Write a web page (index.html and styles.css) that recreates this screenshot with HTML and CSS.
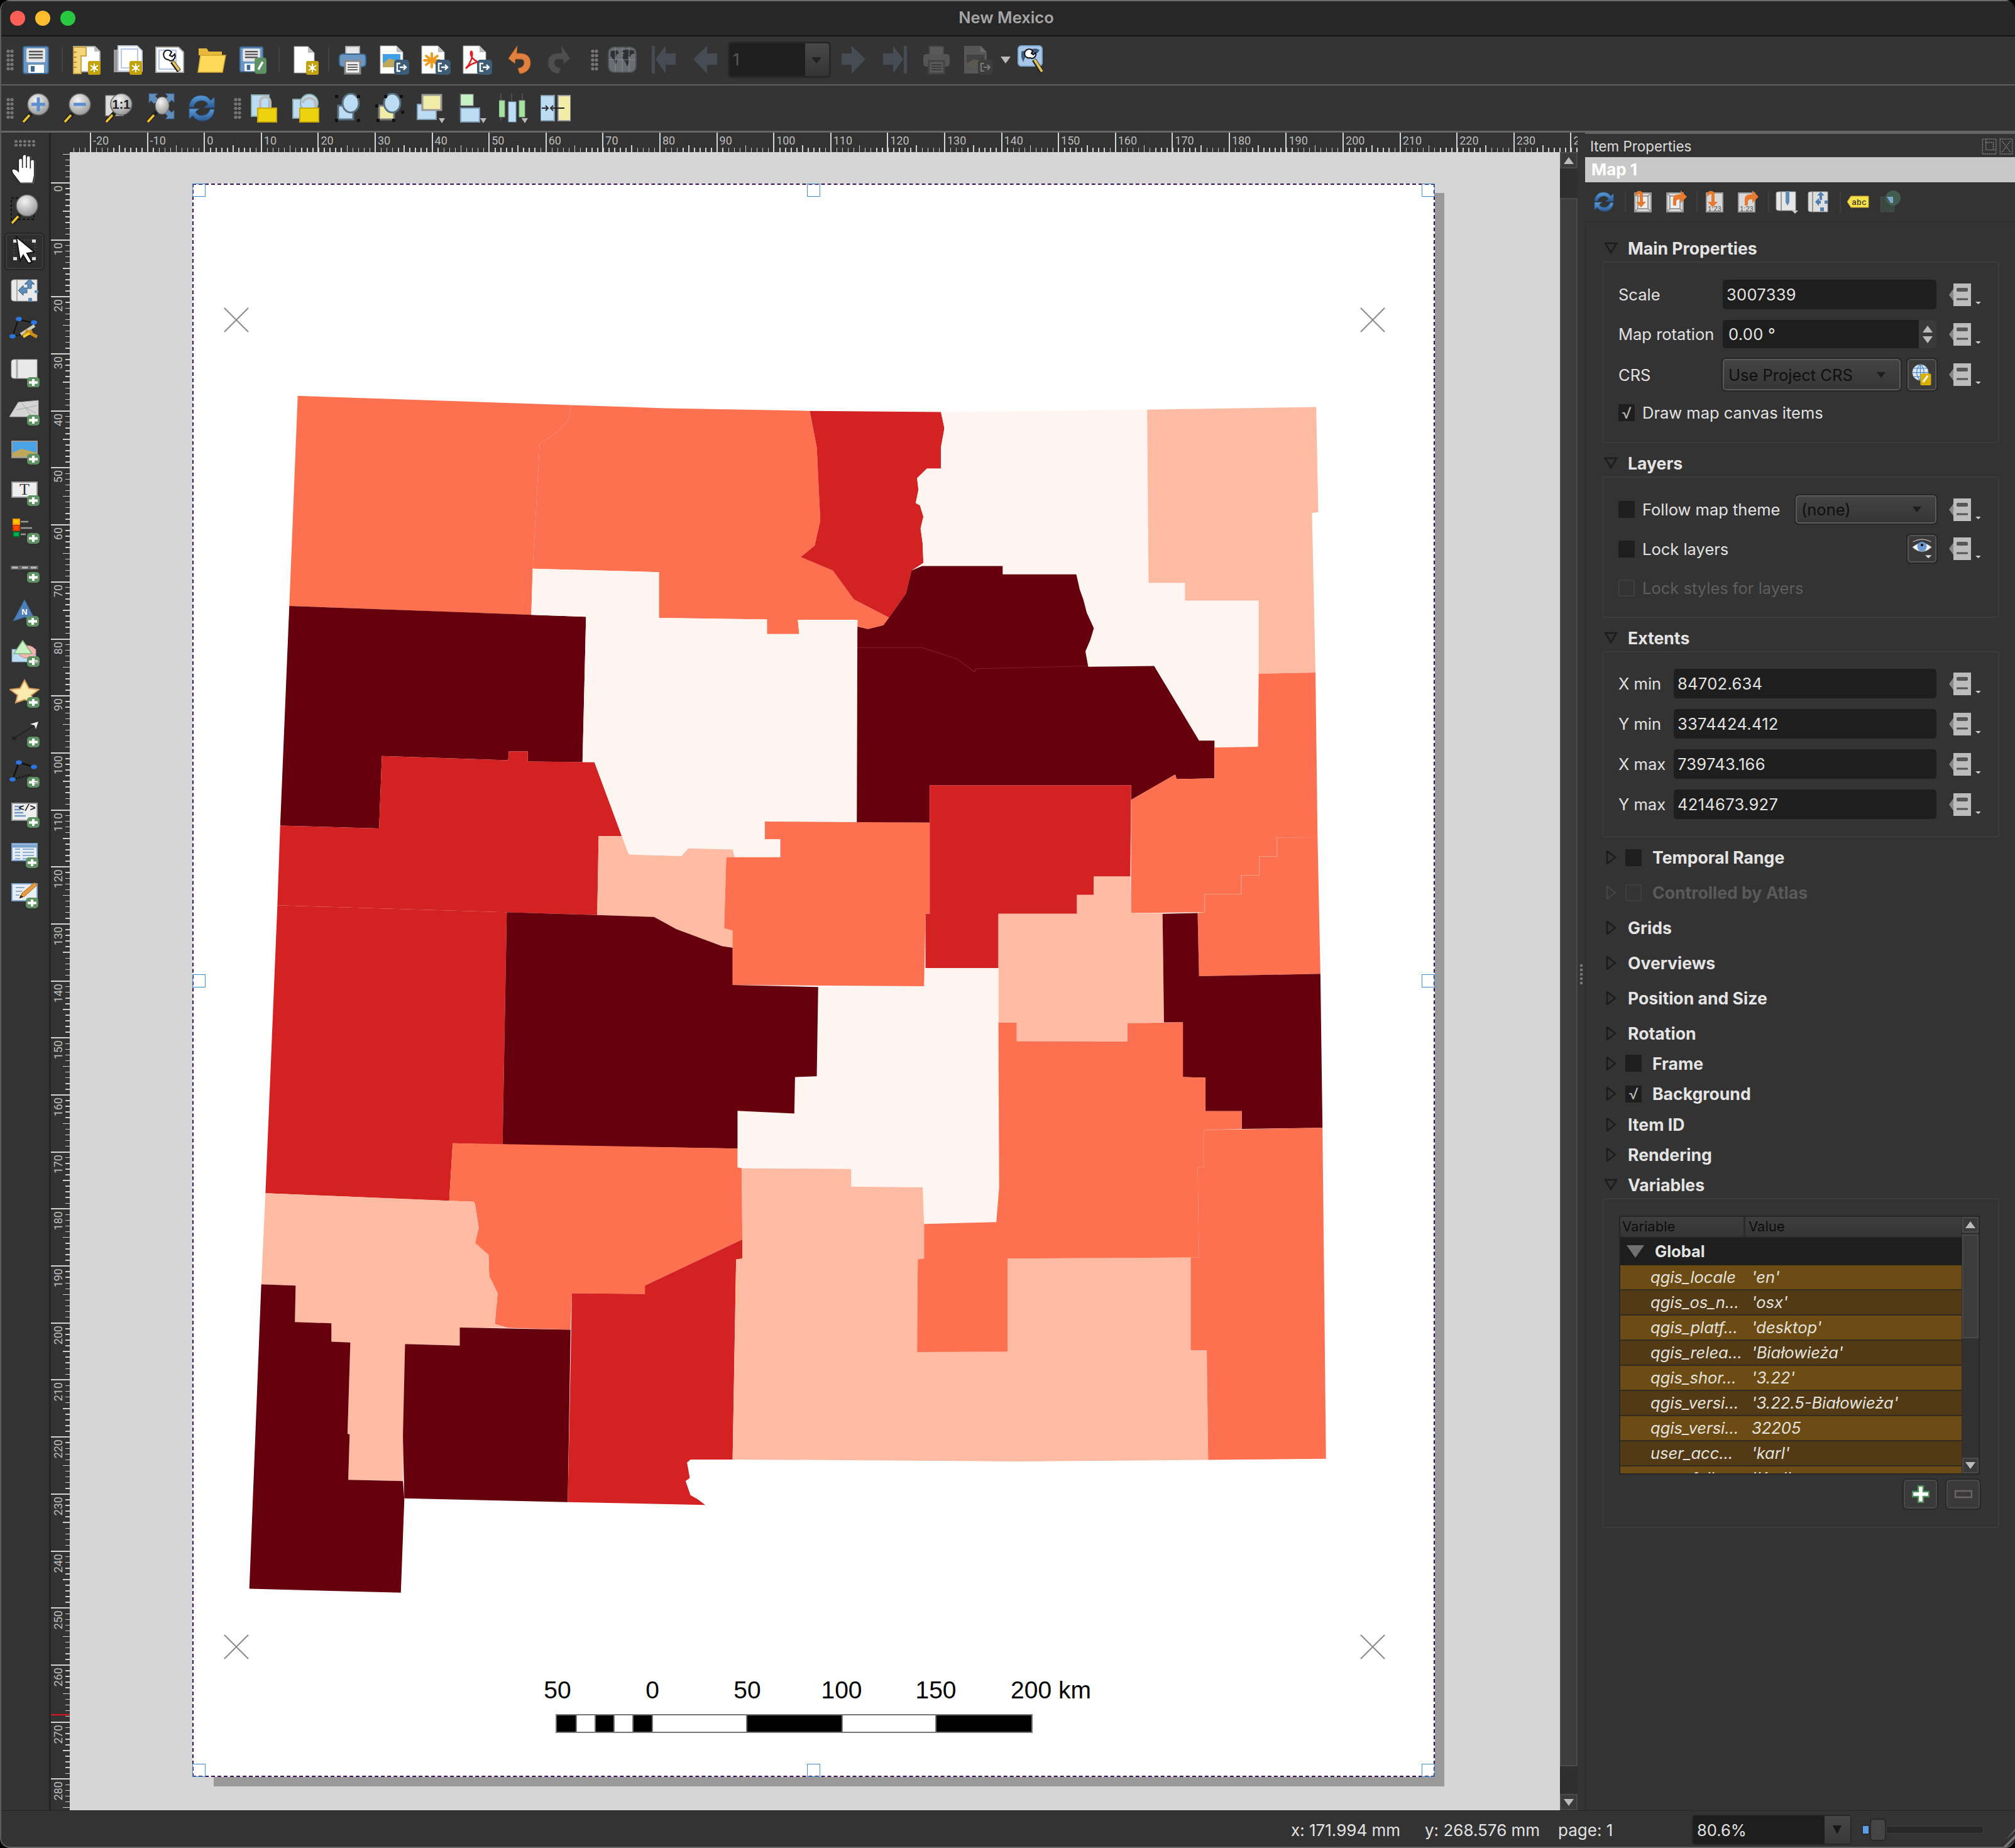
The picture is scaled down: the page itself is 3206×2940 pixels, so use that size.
FILE: index.html
```html
<!DOCTYPE html>
<html lang="en">
<head>
<meta charset="utf-8">
<title>New Mexico</title>
<link rel="stylesheet" href="styles.css">
</head>
<body>
<svg class="defs" xmlns="http://www.w3.org/2000/svg">
  <defs>
    <radialGradient id="gLens" cx=".4" cy=".3" r=".8"><stop offset="0" stop-color="#f4f4f4"/><stop offset="1" stop-color="#8e8e8e"/></radialGradient>
    <linearGradient id="gBlue" x1="0" y1="0" x2="0" y2="1"><stop offset="0" stop-color="#5b9bd8"/><stop offset="1" stop-color="#2b5c98"/></linearGradient>
  </defs>
  <symbol id="bGear" viewBox="0 0 22 24"><rect x="1" y="1" width="20" height="22" rx="3" fill="#c4a309"/><path d="M11 5v14M5 8l12 8M17 8L5 16" stroke="#fff" stroke-width="2"/><circle cx="11" cy="12" r="3" fill="#fff"/></symbol>
  <symbol id="bExp" viewBox="0 0 24 24"><rect width="24" height="24" rx="5" fill="#3d5c75"/><path d="M10 6H5v12h5M9 12h10M15 8l4 4-4 4" fill="none" stroke="#fff" stroke-width="2.4"/></symbol>
  <symbol id="bPlus" viewBox="0 0 20 20"><rect y="2" width="20" height="17" rx="5" fill="#5f9263"/><path d="M10 5v11M3 10.500h14" stroke="#fff" stroke-width="4"/></symbol>
  <symbol id="bPen" viewBox="0 0 22 30"><rect width="22" height="30" rx="5" fill="#5e9163"/><path d="M7 22L15 8" stroke="#fff" stroke-width="4"/></symbol>

  <symbol id="floppy" viewBox="0 0 48 48"><rect x="4" y="3" width="40" height="43" rx="3" fill="#6b96c2" stroke="#3d6690" stroke-width="2"/><rect x="9" y="6" width="30" height="22" rx="2" fill="#e6e6e6"/><path d="M13 11h22M13 16h22M13 21h22" stroke="#555" stroke-width="2.500"/><rect x="12" y="32" width="25" height="13" rx="1" fill="#fff"/><rect x="16" y="34" width="6" height="9" fill="#3d6690"/></symbol>
  <symbol id="newlayout" viewBox="0 0 48 48"><path d="M3 3h34l8 8v32H3z" fill="#fff" stroke="#aaa" stroke-width="2"/><path d="M36 3v8h8z" fill="#bbb"/><path d="M3 4h20v14h-8v28H3z" fill="#f3d67a" stroke="#c9a341" stroke-width="2"/><path d="M3 12h5M3 20h5M3 28h5M3 36h5" stroke="#a07c1e" stroke-width="1.500"/><use href="#bGear" x="25" y="25" width="22" height="24"/></symbol>
  <symbol id="dup" viewBox="0 0 48 48"><rect x="1" y="8" width="36" height="36" fill="#999"/><path d="M8 2h30l8 8v32H8z" fill="#fff" stroke="#c8cfe2" stroke-width="2"/><path d="M13 7h26v30H13z" fill="#fff" stroke="#b9c9ee" stroke-width="2"/><use href="#bGear" x="25" y="25" width="22" height="24"/></symbol>
  <symbol id="manager" viewBox="0 0 48 48"><path d="M2 4h36l8 8v32H2z" fill="#fff" stroke="#aaa" stroke-width="2"/><path d="M7 9h27v30H7z" fill="none" stroke="#b9c9ee" stroke-width="2.500"/><path d="M17 10a8 8 0 0 1 10 2l-3 5 4 2 4-4a8 8 0 0 1-7 11L22 24a8 8 0 0 1-5-14z" fill="#fff" stroke="#111" stroke-width="2"/><path d="M28 27l11 15" stroke="#111" stroke-width="7"/><path d="M29 27l10 14" stroke="#e4c057" stroke-width="4"/></symbol>
  <symbol id="folder" viewBox="0 0 48 48"><path d="M4 6h13l3 5h21v6H4z" fill="#e6b93a"/><path d="M7 17h40l-5 27H3z" fill="#ffd95a" stroke="#d3a730" stroke-width="1.500"/></symbol>
  <symbol id="savetpl" viewBox="0 0 48 48"><use href="#floppy" width="44" height="44" x="0" y="1"/><use href="#bPen" x="27" y="20" width="19" height="27"/></symbol>
  <symbol id="newpage" viewBox="0 0 48 48"><path d="M6 3h22l10 10v32H6z" fill="#fff" stroke="#aaa"/><path d="M28 3v10h10z" fill="#bbb"/><use href="#bGear" x="24" y="25" width="22" height="24"/></symbol>
  <symbol id="printer" viewBox="0 0 48 48"><rect x="13" y="3" width="22" height="16" fill="#e8e8e8" stroke="#aaa" stroke-width="2"/><rect x="3" y="15" width="42" height="20" rx="5" fill="#6b96c2" stroke="#3d6690" stroke-width="2"/><rect x="12" y="26" width="24" height="20" fill="#eee" stroke="#888" stroke-width="3"/><path d="M16 32h16M16 36h16M16 40h16" stroke="#666" stroke-width="2"/></symbol>
  <symbol id="eimg" viewBox="0 0 48 48"><path d="M2 2h26l10 10v34H2z" fill="#fff" stroke="#aaa"/><path d="M28 2v10h10z" fill="#bbb"/><rect x="6" y="15" width="28" height="21" fill="#3ea0e6"/><path d="M6 30l10-8 18 5v9H6z" fill="#bfa85c"/><use href="#bExp" x="24" y="24" width="24" height="24"/></symbol>
  <symbol id="esvg" viewBox="0 0 48 48"><path d="M2 2h26l10 10v34H2z" fill="#fff" stroke="#aaa"/><path d="M28 2v10h10z" fill="#bbb"/><path d="M18 14v22M9 18l18 14M27 18L9 32M6 25h24" stroke="#f09a1e" stroke-width="4" stroke-linecap="round"/><use href="#bExp" x="24" y="24" width="24" height="24"/></symbol>
  <symbol id="epdf" viewBox="0 0 48 48"><path d="M2 2h26l10 10v34H2z" fill="#fff" stroke="#aaa"/><path d="M28 2v10h10z" fill="#bbb"/><path d="M6 38C12 32 18 20 16 12c-1-3-3 0-2 4 2 7 10 13 20 13 3 0-1-3-6-2-6 1-14 3-22 11z" fill="none" stroke="#e31d1d" stroke-width="2.500"/><use href="#bExp" x="24" y="24" width="24" height="24"/></symbol>
  <symbol id="undo" viewBox="0 0 48 48"><path d="M22 2L8 22l10 8 1-7h8c4 0 6 2 6 6s-3 7-7 8l-3 1 3 8c10 0 17-8 17-17 0-10-7-15-16-15h-6z" fill="#e0813e" stroke="#b55f25"/></symbol>
  <symbol id="redo" viewBox="0 0 48 48"><path d="M26 2L40 22l-10 8-1-7h-8c-4 0-6 2-6 6s3 7 7 8l3 1-3 8C12 46 5 38 5 29c0-10 7-15 16-15h6z" fill="#4e4e4e" stroke="#444"/></symbol>
  <symbol id="globe" viewBox="0 0 48 48"><rect x="2" y="4" width="44" height="40" rx="9" fill="#6a6e72" stroke="#4c5055" stroke-width="2"/><path d="M6 10l10-1 3 4-4 3-2 6 3 3-2 7-3-6-3-5-3-3zM22 10l8-2 12 1 2 5-5 1-3 5-3-1 2 8-3 8-3-7-3-4-3-4 3-2-2-3 4-1z" fill="#2e3033"/><path d="M3 24h42M24 4v40M13 4v40M35 4v40" stroke="#868a8e"/></symbol>
  <symbol id="first" viewBox="0 0 48 48"><rect x="5" y="2" width="5" height="44" fill="#454c54"/><path d="M11 23L27 2v12h16v18H27v14z" fill="#454c54"/></symbol>
  <symbol id="prev" viewBox="0 0 48 48"><path d="M5 23L27 2v12h16v18H27v14z" fill="#454c54"/></symbol>
  <symbol id="next" viewBox="0 0 48 48"><path d="M43 23L21 2v12H5v18h16v14z" fill="#454c54"/></symbol>
  <symbol id="last" viewBox="0 0 48 48"><rect x="38" y="2" width="5" height="44" fill="#454c54"/><path d="M37 23L21 2v12H5v18h16v14z" fill="#454c54"/></symbol>
  <symbol id="printerd" viewBox="0 0 48 48"><rect x="13" y="3" width="22" height="16" fill="#5a5a5a" stroke="#4a4a4a" stroke-width="2"/><rect x="3" y="15" width="42" height="20" rx="5" fill="#555"/><rect x="12" y="26" width="24" height="20" fill="#5a5a5a" stroke="#444" stroke-width="3"/><path d="M16 32h16M16 36h16M16 40h16" stroke="#3c3c3c" stroke-width="2"/></symbol>
  <symbol id="eimgd" viewBox="0 0 48 48"><path d="M2 2h26l10 10v34H2z" fill="#565656"/><path d="M28 2v10h10z" fill="#6a6a6a"/><rect x="6" y="16" width="28" height="20" fill="#424242"/><path d="M6 30l12-7 16 5v8H6z" fill="#5a5850"/><rect x="24" y="24" width="24" height="24" rx="5" fill="#3c3c3c"/><path d="M34 30h-5v12h5M33 36h10M39 32l4 4-4 4" fill="none" stroke="#777" stroke-width="2.200"/></symbol>
  <symbol id="atset" viewBox="0 0 48 48"><rect x="2" y="2" width="38" height="32" rx="5" fill="#a7c6e8" stroke="#7fa8d4" stroke-width="2"/><path d="M7 11c5-2 8-1 9 3l-3 6-3 8-3-8zM24 7c6-2 10 0 12 2l-3 4-4 1 1 4-6 2z" fill="#3e5c7c"/><path d="M16 8a7 7 0 0 1 9 2l-2 4 3 2 4-3a7 7 0 0 1-6 9l-3-1a7 7 0 0 1-5-13z" fill="#fff" stroke="#111" stroke-width="2"/><path d="M27 24l13 20" stroke="#222" stroke-width="7"/><path d="M28 24l12 19" stroke="#e4c057" stroke-width="4"/></symbol>

  <symbol id="mag" viewBox="0 0 48 48"><path d="M18 31L4 46" stroke="#222" stroke-width="7"/><path d="M14 35L4 46" stroke="#f0c52e" stroke-width="3.500"/><circle cx="28" cy="18" r="17" fill="url(#gLens)" stroke="#666" stroke-width="1.500"/></symbol>
  <symbol id="zin" viewBox="0 0 48 48"><use href="#mag"/><path d="M28 7v22M17 18h22" stroke="#5b8fd0" stroke-width="5"/></symbol>
  <symbol id="zout" viewBox="0 0 48 48"><use href="#mag"/><path d="M18 18h20" stroke="#5b8fd0" stroke-width="5"/></symbol>
  <symbol id="z11" viewBox="0 0 48 48"><rect x="3" y="4" width="28" height="32" fill="#ddd" stroke="#999"/><use href="#mag"/></symbol>
  <symbol id="zfull" viewBox="0 0 48 48"><path d="M6 1h14l-4 4 5 5-7 7-5-5-3 4zM46 1v14l-4-4-5 6-6-6 5-6-4-4zM46 41H32l4-4-5-5 6-6 5 5 4-4z" fill="#5f8cb8" stroke="#3a628c"/><path d="M18 30L4 46" stroke="#222" stroke-width="6"/><path d="M14 35L4 46" stroke="#f0c52e" stroke-width="3.500"/><ellipse cx="27" cy="20" rx="11" ry="14" fill="url(#gLens)" stroke="#666"/></symbol>
  <symbol id="refresh" viewBox="0 0 48 48"><path d="M4 22C5 10 14 3 24 4c6 0 11 3 14 8l6-5v16H28l6-5c-2-4-6-6-10-6-6 0-12 4-13 10z" fill="url(#gBlue)" stroke="#2a5a90"/><path d="M44 26C43 38 34 45 24 44c-6 0-11-3-14-8l-6 5V25h16l-6 5c2 4 6 6 10 6 6 0 12-4 13-10z" fill="url(#gBlue)" stroke="#2a5a90"/></symbol>
  <symbol id="lock" viewBox="0 0 48 48"><rect x="2" y="3" width="28" height="34" fill="#bcdcf4" stroke="#8aa" stroke-width="2"/><path d="M16 26V14a8 8 0 0 1 16 0v12" fill="none" stroke="#bbb" stroke-width="4"/><rect x="12" y="24" width="30" height="22" fill="#ecd30e" stroke="#c8a90c" stroke-width="2"/></symbol>
  <symbol id="unlock" viewBox="0 0 48 48"><rect x="2" y="10" width="24" height="30" fill="#bcdcf4" stroke="#8aa" stroke-width="2"/><circle cx="28" cy="16" r="14" fill="#bcdcf4" stroke="#8aa" stroke-width="2"/><path d="M18 16a10 8 0 0 1 20 0v8" fill="none" stroke="#bbb" stroke-width="4"/><rect x="13" y="24" width="30" height="22" fill="#ecd30e" stroke="#c8a90c" stroke-width="2"/></symbol>
  <symbol id="group" viewBox="0 0 48 48"><rect x="8" y="20" width="24" height="22" fill="#bcdcf4" stroke="#58707f" stroke-width="3"/><ellipse cx="28" cy="16" rx="13" ry="15" fill="#bcdcf4" stroke="#58707f" stroke-width="3"/><path d="M3 3h5v5H3zM38 3h5v5h-5zM3 41h5v5H3zM38 41h5v5h-5z" fill="#111"/></symbol>
  <symbol id="ungroup" viewBox="0 0 48 48"><rect x="7" y="20" width="24" height="22" fill="#f1eda8" stroke="#777" stroke-width="3"/><ellipse cx="28" cy="16" rx="13" ry="15" fill="#bcdcf4" stroke="#58707f" stroke-width="3"/><path d="M15 3h5v5h-5zM40 3h5v5h-5zM1 18h5v5H1zM42 28h5v5h-5zM3 41h5v5H3zM28 41h5v5h-5z" fill="#111"/></symbol>
  <symbol id="raise" viewBox="0 0 48 48"><rect x="2" y="18" width="30" height="24" fill="#bcdcf4" stroke="#7f9db5" stroke-width="2"/><rect x="10" y="3" width="30" height="24" fill="#f1eda8" stroke="#999" stroke-width="3"/><path d="M36 40h10l-5 8z" fill="#bbb"/></symbol>
  <symbol id="alignL" viewBox="0 0 48 48"><path d="M3 0v44" stroke="#444" stroke-width="1.500"/><rect x="5" y="2" width="20" height="18" fill="#c6f2c4" stroke="#999"/><rect x="5" y="24" width="30" height="22" fill="#bcdcf4" stroke="#7f9db5" stroke-width="2"/><path d="M36 40h10l-5 8z" fill="#bbb"/></symbol>
  <symbol id="distrib" viewBox="0 0 48 48"><path d="M3 0v44M20 0v44M37 0v44" stroke="#555" stroke-width="1.500"/><rect x="0" y="12" width="9" height="26" fill="#a5e1a3" stroke="#7fb27d"/><rect x="15" y="14" width="12" height="32" fill="#bcdcf4" stroke="#7f9db5"/><rect x="32" y="12" width="9" height="26" fill="#a5e1a3" stroke="#7fb27d"/><path d="M36 40h10l-5 8z" fill="#bbb"/></symbol>
  <symbol id="resize" viewBox="0 0 48 48"><rect x="0" y="4" width="22" height="40" fill="#bcdcf4" stroke="#7f9db5" stroke-width="2"/><rect x="28" y="4" width="20" height="40" fill="#f1eda8" stroke="#999" stroke-width="2"/><path d="M2 24h8M18 24h12M38 24h-8M8 20l4 4-4 4M20 20l-4 4 4 4" fill="none" stroke="#222" stroke-width="1.800"/></symbol>

  <symbol id="hand" viewBox="0 0 48 48"><g transform="translate(-6 0) scale(1.27 1)"><path d="M19 47L10 31Q7 24 11 24Q14 24 17 28V11Q17 7 20 7Q22 7 22 10V22V5Q22 1 25 1Q27 1 27 5V22V6Q27 3 30 3Q32 3 32 7V23V12Q32 9 35 9Q37 9 37 12V34L35 47Z" fill="#999"/><path d="M18 46L9 31Q6 24 10 24Q13 24 16 28V11Q16 7 19 7Q21 7 21 10V22V5Q21 1 24 1Q26 1 26 5V22V6Q26 3 29 3Q31 3 31 7V23V12Q31 9 34 9Q36 9 36 12V34L34 46Z" fill="#fff" stroke="#1c1c1c" stroke-width="1.200"/></g></symbol>
  <symbol id="zoomt" viewBox="0 0 48 48"><rect x="3" y="6" width="36" height="34" fill="none" stroke="#111" stroke-width="2" stroke-dasharray="4 3"/><use href="#mag"/></symbol>
  <symbol id="select" viewBox="0 0 48 48"><path d="M6 8h6v5H6zM36 8h6v5h-6zM6 36h6v5H6zM36 36h6v5h-6z" fill="#ddd"/><path d="M7 14v22M41 14v22M13 9h22" stroke="#666" stroke-dasharray="2 3"/><path d="M11 4L40 28 28 30 36 44 30 46 22 33 17 42z" fill="#fff" stroke="#111" stroke-width="2"/></symbol>
  <symbol id="movec" viewBox="0 0 48 48"><path d="M8 5h36v34H8q-5 0-5-4V9q0-4 5-4z" fill="#e9e9e9" stroke="#aaa"/><path d="M12 5v34" stroke="#aaa" stroke-width="2"/><path d="M14 22L22 14v4h6v8h-6v4zM32 4l8 8h-5v7h-6v-7h-5z" fill="#5f8cb8" stroke="#3a628c"/><path d="M40 22h6v4h-6zM30 34h6v6h-6z" fill="#5f8cb8"/></symbol>
  <symbol id="editn" viewBox="0 0 48 48"><path d="M14 4L5 31M14 4l26 6" stroke="#111" stroke-width="2"/><path d="M5 31l30-6" stroke="#111" stroke-width="2" stroke-dasharray="3 2"/><ellipse cx="15" cy="3.500" rx="5" ry="3.500" fill="#2b78e4"/><ellipse cx="39" cy="9" rx="5" ry="3.500" fill="#2b78e4"/><ellipse cx="5" cy="31" rx="5" ry="3.500" fill="#2b78e4"/><path d="M18 28l22-14" stroke="#ccb" stroke-width="5"/><path d="M22 30l14-8M26 22l18 10" stroke="#c8901a" stroke-width="5"/><path d="M22 32l10-6" stroke="#f5d020" stroke-width="4"/></symbol>
  <symbol id="addmap" viewBox="0 0 48 48"><path d="M8 4h36v30H8q-5 0-5-4V8q0-4 5-4z" fill="#e9e9e9" stroke="#aaa"/><path d="M12 4v30" stroke="#aaa" stroke-width="3"/><use href="#bPlus" x="28" y="30" width="20" height="20"/></symbol>
  <symbol id="add3d" viewBox="0 0 48 48"><path d="M14 8l32-3v26H0z" fill="#d4d4d4" stroke="#aaa"/><path d="M10 20l16-3 8 12M20 10l6 7 18-4M26 17l16 8" stroke="#aaa" fill="none"/><use href="#bPlus" x="28" y="26" width="20" height="20"/></symbol>
  <symbol id="addpic" viewBox="0 0 48 48"><rect x="4" y="6" width="40" height="26" fill="#4aa3e6" stroke="#999" stroke-width="2"/><path d="M5 24l14-6 24 6v7H5z" fill="#bfa85c"/><use href="#bPlus" x="28" y="24" width="20" height="20"/></symbol>
  <symbol id="addlabel" viewBox="0 0 48 48"><rect x="4" y="7" width="40" height="24" fill="#eee" stroke="#999" stroke-width="2"/></symbol>
  <symbol id="addleg" viewBox="0 0 48 48"><rect x="6" y="2" width="10" height="8" fill="#ffc400" stroke="#ff9a00" stroke-width="2"/><rect x="6" y="12" width="10" height="8" fill="#ff4a00" stroke="#c83a00" stroke-width="2"/><rect x="6" y="22" width="10" height="8" fill="#00b050" stroke="#0b5c2c" stroke-width="2"/><path d="M18 6h12M18 16h18M18 26h8" stroke="#999" stroke-width="2.500"/><use href="#bPlus" x="28" y="22" width="20" height="20"/></symbol>
  <symbol id="addscale" viewBox="0 0 48 48"><rect x="2" y="12" width="44" height="6" fill="#666"/><path d="M4 15h9M20 15h9M34 15h9" stroke="#bbb" stroke-width="3"/><use href="#bPlus" x="28" y="20" width="20" height="20"/></symbol>
  <symbol id="addnorth" viewBox="0 0 48 48"><path d="M24 2L6 36l18-6 18 6z" fill="#4f7fb8" stroke="#345f90"/></symbol>
  <symbol id="addshape" viewBox="0 0 48 48"><rect x="4" y="17" width="38" height="20" fill="#bcdcf4" stroke="#7f9db5"/><ellipse cx="28" cy="21" rx="14" ry="10" fill="#f4b4b0" stroke="#d08884"/><path d="M21 3l15 21H7z" fill="#c6f2c4" stroke="#7fb27d" stroke-width="1.500"/><use href="#bPlus" x="28" y="26" width="20" height="20"/><path d="M38 36h10l-5 4z" fill="#aaa"/></symbol>
  <symbol id="addstar" viewBox="0 0 48 48"><path d="M24 2l7 13 16 2-12 9 3 11-14-4-14 5 3-12L1 17l16-2z" fill="#fbeab0" stroke="#d89a5a" stroke-width="2"/><use href="#bPlus" x="28" y="27" width="20" height="20"/></symbol>
  <symbol id="addarrow" viewBox="0 0 48 48"><rect x="4" y="28" width="7" height="5" fill="#222"/><path d="M8 30L40 10" stroke="#222" stroke-width="1.500"/><path d="M46 4L33 8l7 2 2 6z" fill="#eee"/><use href="#bPlus" x="28" y="26" width="20" height="20"/></symbol>
  <symbol id="addnode" viewBox="0 0 48 48"><path d="M15 5L5 32M15 5l24 7" stroke="#111" stroke-width="2.500"/><path d="M5 32l30-8" stroke="#111" stroke-width="2" stroke-dasharray="3 2"/><ellipse cx="15" cy="5" rx="5" ry="3.500" fill="#2b78e4"/><ellipse cx="39" cy="12" rx="5" ry="3.500" fill="#2b78e4"/><ellipse cx="5" cy="32" rx="5" ry="3.500" fill="#2b78e4"/><use href="#bPlus" x="28" y="26" width="20" height="20"/><path d="M38 36h10l-5 4z" fill="#aaa"/></symbol>
  <symbol id="addhtml" viewBox="0 0 48 48"><rect x="4" y="6" width="40" height="27" fill="#eee" stroke="#999" stroke-width="2"/><path d="M8 11h12M8 16h10M8 21h14M8 26h18" stroke="#7099c8" stroke-width="2.500"/></symbol>
  <symbol id="addtable" viewBox="0 0 48 48"><rect x="4" y="6" width="40" height="27" fill="#e8eef6" stroke="#7aa3d0" stroke-width="2"/><path d="M4 10h40" stroke="#7aa3d0" stroke-width="5"/><path d="M9 15h8M21 15h18M9 20h8M21 20h18M9 25h8M21 25h18M9 30h8M21 30h18" stroke="#7099c8" stroke-width="1.500"/><use href="#bPlus" x="24" y="26" width="24" height="20"/></symbol>
  <symbol id="addfix" viewBox="0 0 48 48"><rect x="4" y="6" width="40" height="27" fill="#e8eef6" stroke="#7aa3d0" stroke-width="2"/><path d="M10 12h14M10 18h10M10 24h6" stroke="#7099c8" stroke-width="1.500"/><path d="M40 4L20 21l-4 8 8-3 20-18z" fill="#e89a3c" stroke="#a8621a"/><path d="M18 24l-2 5 6-2z" fill="#222"/><use href="#bPlus" x="24" y="26" width="24" height="20"/></symbol>

  <symbol id="setext" viewBox="0 0 36 40"><path d="M4 6h26v30H4z" fill="#d8d8d8" stroke="#999" stroke-width="2"/><path d="M9 11h16v20H9zM4 6l5 5M30 6l-5 5M4 36l5-5M30 36l-5-5" fill="#efefef" stroke="#888" stroke-width="1.500"/><path d="M6 12C2 4 12-1 17 6v14h5l-8 9-8-9h6V9C12 7 8 8 6 12z" fill="#e87a2f"/></symbol>
  <symbol id="viewext" viewBox="0 0 36 40"><path d="M4 6h26v30H4z" fill="#d8d8d8" stroke="#999" stroke-width="2"/><path d="M9 11h16v20H9zM4 6l5 5M30 6l-5 5M4 36l5-5M30 36l-5-5" fill="#efefef" stroke="#888" stroke-width="1.500"/><path d="M14 26V16c0-6 4-8 12-8V2l10 10-10 10v-6c-5 0-7 1-7 5v5z" fill="#e87a2f"/></symbol>
  <symbol id="setscale" viewBox="0 0 36 40"><path d="M4 6h26v30H4z" fill="#d8d8d8" stroke="#999" stroke-width="2"/><path d="M6 12C2 4 12-1 17 6v14h5l-8 9-8-9h6V9C12 7 8 8 6 12z" fill="#e87a2f"/></symbol>
  <symbol id="viewscale" viewBox="0 0 36 40"><path d="M4 6h26v30H4z" fill="#d8d8d8" stroke="#999" stroke-width="2"/><path d="M14 26V16c0-6 4-8 12-8V2l10 10-10 10v-6c-5 0-7 1-7 5v5z" fill="#e87a2f"/></symbol>
  <symbol id="bookmk" viewBox="0 0 36 40"><path d="M6 4h26v30H6q-5 0-5-3V6q0-2 5-2z" fill="#e6e6e6" stroke="#999"/><path d="M9 4v30" stroke="#999" stroke-width="2"/><path d="M16 3h6v18l-3 5-3-5z" fill="#5f8cb8"/><path d="M26 34h10l-5 5z" fill="#ccc"/></symbol>
  <symbol id="interact" viewBox="0 0 36 40"><path d="M6 4h26v32H6q-5 0-5-3V6q0-2 5-2z" fill="#dedede" stroke="#999"/><path d="M8 4v32" stroke="#999" stroke-width="2"/><path d="M12 20l6-6v4h3v5h-3v4zM21 4l6 6h-4v7h-4v-7h-4zM27 18h5v5h-5zM20 29h6v6h-6z" fill="#4f7fb0"/></symbol>
  <symbol id="abc" viewBox="0 0 36 40"><path d="M0 20L6 11h28v18H6z" fill="#f7e14a" stroke="#c9a12a"/></symbol>
  <symbol id="overlay" viewBox="0 0 36 40"><rect x="2" y="12" width="22" height="24" fill="#3b4a41" stroke="#555" stroke-dasharray="2 2"/><circle cx="22" cy="14" r="12" fill="#425d4f"/><path d="M12 12h10v10h-4l-3-5z" fill="#7da6cc"/></symbol>
  <symbol id="crsbtn" viewBox="0 0 40 40"><circle cx="17" cy="16" r="15" fill="#dfe8f2" stroke="#8a8a8a"/><path d="M2 16h30M17 1v30M5 8h24M5 24h24M17 1c-9 8-9 22 0 30M17 1c9 8 9 22 0 30" fill="none" stroke="#4a8ad0" stroke-width="1.500"/><rect x="17" y="18" width="20" height="22" rx="3" fill="#d9b000"/><path d="M22 34l9-12" stroke="#fff" stroke-width="3.500"/></symbol>
  <symbol id="eye" viewBox="0 0 40 40"><path d="M3 7Q20-2 37 7" fill="none" stroke="#bbb" stroke-width="1.500"/><path d="M2 17Q20 2 38 17Q20 34 2 17z" fill="#fff" stroke="#888"/><circle cx="20" cy="16" r="9" fill="#6c9bd2"/><circle cx="20" cy="13" r="2.500" fill="#111"/><path d="M26 32h12l-6 6z" fill="#ddd"/></symbol>
  <symbol id="dd" viewBox="0 0 50 36"><path d="M0 18L8 7v22z" fill="#888"/><rect x="7" y="0" width="28" height="36" fill="#bcbcbc"/><rect x="12" y="7" width="18" height="6" rx="2" fill="#555"/><path d="M12 25h18" stroke="#555" stroke-width="3"/><path d="M42 29h9l-4.500 4z" fill="#ccc"/></symbol>
</svg>

<div class="window">
  <header class="titlebar">
    <div class="lights"><span class="light red"></span><span class="light amber"></span><span class="light green"></span></div>
    <div class="title">New Mexico</div>
  </header>

  <div class="toolbar tb1">
    <span class="grip"></span>
    <span class="tb"><svg class="ico"><use href="#floppy"/></svg></span>
    <span class="sep s15"></span>
    <span class="tb"><svg class="ico"><use href="#newlayout"/></svg></span>
    <span class="tb"><svg class="ico"><use href="#dup"/></svg></span>
    <span class="tb"><svg class="ico"><use href="#manager"/></svg></span>
    <span class="tb"><svg class="ico"><use href="#folder"/></svg></span>
    <span class="tb"><svg class="ico"><use href="#savetpl"/></svg></span>
    <span class="sep s18"></span>
    <span class="tb"><svg class="ico"><use href="#newpage"/></svg></span>
    <span class="sep s9"></span>
    <span class="tb"><svg class="ico"><use href="#printer"/></svg></span>
    <span class="tb"><svg class="ico"><use href="#eimg"/></svg></span>
    <span class="tb"><svg class="ico"><use href="#esvg"/></svg></span>
    <span class="tb"><svg class="ico"><use href="#epdf"/></svg></span>
    <span class="tb"><svg class="ico"><use href="#undo"/></svg></span>
    <span class="tb"><svg class="ico"><use href="#redo"/></svg></span>
    <span class="grip g2"></span>
    <span class="tb"><svg class="ico"><use href="#globe"/></svg></span>
    <span class="tb"><svg class="ico"><use href="#first"/></svg></span>
    <span class="tb"><svg class="ico"><use href="#prev"/></svg></span>
    <div class="pagecombo"><span class="pagecombo-text">1</span><span class="pagecombo-arrow"></span></div>
    <span class="tb"><svg class="ico"><use href="#next"/></svg></span>
    <span class="tb"><svg class="ico"><use href="#last"/></svg></span>
    <span class="tb"><svg class="ico"><use href="#printerd"/></svg></span>
    <span class="tb"><svg class="ico"><use href="#eimgd"/></svg></span>
    <span class="menu-arrow"></span>
    <span class="tb"><svg class="ico"><use href="#atset"/></svg></span>
  </div>

  <div class="toolbar tb2">
    <span class="grip"></span>
    <span class="tb"><svg class="ico"><use href="#zin"/></svg></span>
    <span class="tb"><svg class="ico"><use href="#zout"/></svg></span>
    <span class="tb"><svg class="ico"><use href="#z11"/><text x="28" y="25" class="svg-11">1:1</text></svg></span>
    <span class="tb"><svg class="ico"><use href="#zfull"/></svg></span>
    <span class="tb"><svg class="ico"><use href="#refresh"/></svg></span>
    <span class="grip g2"></span>
    <span class="tb"><svg class="ico"><use href="#lock"/></svg></span>
    <span class="tb"><svg class="ico"><use href="#unlock"/></svg></span>
    <span class="tb"><svg class="ico"><use href="#group"/></svg></span>
    <span class="tb"><svg class="ico"><use href="#ungroup"/></svg></span>
    <span class="tb"><svg class="ico"><use href="#raise"/></svg></span>
    <span class="tb"><svg class="ico"><use href="#alignL"/></svg></span>
    <span class="tb"><svg class="ico"><use href="#distrib"/></svg></span>
    <span class="tb"><svg class="ico"><use href="#resize"/></svg></span>
  </div>

  <div class="workspace">
    <aside class="tools">
      <span class="grip-h"></span>
      <span class="tool up"><svg class="ico"><use href="#hand"/></svg></span>
      <span class="tool up"><svg class="ico"><use href="#zoomt"/></svg></span>
      <span class="tool active up"><svg class="ico"><use href="#select"/></svg></span>
      <span class="tool"><svg class="ico"><use href="#movec"/></svg></span>
      <span class="tool"><svg class="ico"><use href="#editn"/></svg></span>
      <span class="tool"><svg class="ico"><use href="#addmap"/></svg></span>
      <span class="tool"><svg class="ico"><use href="#add3d"/></svg></span>
      <span class="tool"><svg class="ico"><use href="#addpic"/></svg></span>
      <span class="tool"><svg class="ico"><use href="#addlabel"/><text x="24" y="27" class="svg-t">T</text><use href="#bPlus" x="28" y="26" width="20" height="20"/></svg></span>
      <span class="tool"><svg class="ico"><use href="#addleg"/></svg></span>
      <span class="tool"><svg class="ico"><use href="#addscale"/></svg></span>
      <span class="tool"><svg class="ico"><use href="#addnorth"/><text x="24" y="26" class="svg-n">N</text><use href="#bPlus" x="26" y="26" width="22" height="20"/></svg></span>
      <span class="tool"><svg class="ico"><use href="#addshape"/></svg></span>
      <span class="tool"><svg class="ico"><use href="#addstar"/></svg></span>
      <span class="tool"><svg class="ico"><use href="#addarrow"/></svg></span>
      <span class="tool"><svg class="ico"><use href="#addnode"/></svg></span>
      <span class="tool"><svg class="ico"><use href="#addhtml"/><text x="28" y="18" class="svg-c">&lt;/&gt;</text><use href="#bPlus" x="28" y="26" width="20" height="20"/></svg></span>
      <span class="tool"><svg class="ico"><use href="#addtable"/></svg></span>
      <span class="tool"><svg class="ico"><use href="#addfix"/></svg></span>
    </aside>

    <main class="center">
      <div class="hruler-row">
        <div class="ruler-corner"></div>
        <div class="hruler">
          <span class="htick">-20</span><span class="htick">-10</span><span class="htick">0</span><span class="htick">10</span><span class="htick">20</span><span class="htick">30</span><span class="htick">40</span><span class="htick">50</span><span class="htick">60</span><span class="htick">70</span><span class="htick">80</span><span class="htick">90</span><span class="htick">100</span><span class="htick">110</span><span class="htick">120</span><span class="htick">130</span><span class="htick">140</span><span class="htick">150</span><span class="htick">160</span><span class="htick">170</span><span class="htick">180</span><span class="htick">190</span><span class="htick">200</span><span class="htick">210</span><span class="htick">220</span><span class="htick">230</span><span class="htick">240</span>
        </div>
      </div>
      <div class="canvas-row">
        <div class="vruler">
          <div class="vtick"><span>0</span></div><div class="vtick"><span>10</span></div><div class="vtick"><span>20</span></div><div class="vtick"><span>30</span></div><div class="vtick"><span>40</span></div><div class="vtick"><span>50</span></div><div class="vtick"><span>60</span></div><div class="vtick"><span>70</span></div><div class="vtick"><span>80</span></div><div class="vtick"><span>90</span></div><div class="vtick"><span>100</span></div><div class="vtick"><span>110</span></div><div class="vtick"><span>120</span></div><div class="vtick"><span>130</span></div><div class="vtick"><span>140</span></div><div class="vtick"><span>150</span></div><div class="vtick"><span>160</span></div><div class="vtick"><span>170</span></div><div class="vtick"><span>180</span></div><div class="vtick"><span>190</span></div><div class="vtick"><span>200</span></div><div class="vtick"><span>210</span></div><div class="vtick"><span>220</span></div><div class="vtick"><span>230</span></div><div class="vtick"><span>240</span></div><div class="vtick"><span>250</span></div><div class="vtick"><span>260</span></div><div class="vtick"><span>270</span></div><div class="vtick"><span>280</span></div>
          <i class="cursor-mark"></i>
        </div>
        <div class="canvas">
          <div class="sheet">
            <svg class="sheet-art" viewBox="306 292 1977 2535" preserveAspectRatio="none" xmlns="http://www.w3.org/2000/svg">
              <g transform="translate(390 620) scale(1.116 .6122)">
                <polygon class="c3" points="75,16 465,40 460,80 445,110 420,140 410,465 408,585 63,562"/>
                <polygon class="c3" points="465,40 598,48 805,55 815,150 820,340 812,405 792,435 838,470 868,545 918,592 910,612 888,622 873,615 873,598 788,598 790,635 744,635 744,597 590,593 590,474 410,465 420,140 445,110 460,80"/>
                <polygon class="c4" points="805,55 992,58 997,100 992,150 992,205 972,205 958,230 960,260 956,295 962,300 967,330 963,360 966,400 967,450 950,470 942,530 918,592 868,545 838,470 792,435 812,405 820,340 815,150"/>
                <polygon class="c1" points="992,58 1286,52 1288,502 1340,502 1340,548 1445,548 1445,735 1444,928 1382,930 1382,912 1360,912 1296,710 1286,718 1202,720 1198,680 1205,650 1210,620 1205,600 1200,580 1195,545 1190,520 1185,480 1080,480 1080,458 965,458 967,450 966,400 963,360 967,330 962,300 956,295 960,260 958,230 972,205 992,205 992,150 997,100"/>
                <polygon class="c2" points="1286,52 1527,45 1530,318 1521,320 1526,735 1445,738 1445,548 1340,548 1340,502 1288,502"/>
                <polygon class="c5" points="965,458 1080,458 1080,480 1185,480 1190,520 1195,545 1200,580 1205,600 1210,620 1205,650 1198,680 1202,720 1296,718 1360,912 1382,912 1382,1010 1328,1012 1326,1000 1263,1066 1263,1028 976,1028 976,1125 872,1125 872,615 888,622 910,612 918,592 942,530 950,470"/>
                <polyline class="seam" points="872,670 965,670 1015,700 1040,733 1042,725 1202,718"/>
                <polygon class="c5" points="63,562 486,590 481,968 403,966 403,940 376,940 375,963 195,952 191,1140 50,1133"/>
                <polygon class="c4" points="195,952 375,963 376,940 403,940 403,966 498,968 537,1160 504,1160 502,1365 46,1340 50,1133 191,1140"/>
                <polygon class="c1" points="410,465 590,474 590,593 744,597 744,635 790,635 788,598 873,598 872,1122 741,1122 741,1168 763,1168 763,1215 698,1215 695,1195 632,1192 622,1212 547,1208 498,968 481,968 486,590 408,585"/>
                <polygon class="c2" points="504,1160 537,1160 547,1208 622,1212 632,1192 695,1195 698,1215 686,1215 683,1400 695,1405 695,1450 680,1446 615,1402 583,1370 502,1365"/>
                <polygon class="c3" points="741,1122 976,1125 976,1362 970,1362 968,1550 695,1547 695,1405 683,1400 686,1215 763,1215 763,1168 741,1168"/>
                <polygon class="c4" points="976,1028 1263,1028 1262,1265 1210,1265 1210,1313 1186,1313 1186,1362 1074,1362 1074,1503 970,1503 970,1362 976,1362"/>
                <polygon class="c3" points="1263,1066 1326,1000 1328,1012 1382,1010 1382,930 1444,928 1445,738 1526,735 1529,1163 1471,1164 1471,1213 1446,1213 1446,1262 1420,1262 1420,1311 1368,1311 1368,1358 1263,1360"/>
                <polygon class="c3" points="1471,1164 1529,1163 1533,1518 1360,1524 1358,1360 1368,1358 1368,1311 1420,1311 1420,1262 1446,1262 1446,1213 1471,1213"/>
                <polyline class="seam-l" points="1471,1164 1471,1213 1446,1213 1446,1262 1420,1262 1420,1311 1368,1311 1368,1358"/>
                <polygon class="c2" points="1074,1362 1186,1362 1186,1313 1210,1313 1210,1265 1262,1265 1263,1360 1308,1360 1310,1644 1258,1646 1258,1694 1100,1693 1100,1645 1074,1645"/>
                <polygon class="c5" points="1308,1362 1358,1360 1360,1524 1533,1518 1536,1918 1421,1921 1421,1875 1369,1875 1369,1788 1337,1786 1337,1644 1310,1644"/>
                <polygon class="c1" points="970,1503 1074,1503 1074,1645 1075,2073 1071,2163 968,2168 966,2073 864,2071 864,2025 702,2021 702,1874 783,1881 784,1786 815,1784 817,1552 968,1550"/>
                <polygon class="c4" points="46,1340 373,1358 367,1962 296,1958 291,2108 29,2088"/>
                <polygon class="c5" points="373,1358 502,1365 583,1370 615,1402 680,1446 695,1450 695,1547 817,1552 815,1784 784,1786 783,1881 702,1874 702,1972 367,1962"/>
                <polygon class="c3" points="296,1958 702,1972 702,2021 708,2023 709,2208 570,2328 570,2350 466,2348 464,2443 375,2438 356,2428 360,2348 348,2303 347,2248 328,2218 333,2178 328,2118 326,2110 291,2108"/>
                <polygon class="c2" points="29,2088 326,2110 328,2118 333,2178 328,2218 347,2248 348,2303 360,2348 356,2428 375,2438 306,2437 306,2484 228,2480 226,2720 225,2836 147,2833 149,2715 146,2713 150,2476 123,2474 123,2426 71,2423 72,2328 23,2325"/>
                <polygon class="c5" points="23,2325 72,2328 71,2423 123,2426 123,2474 150,2476 146,2713 149,2715 147,2833 225,2836 227,2883 222,3126 6,3116"/>
                <polygon class="c5" points="306,2437 464,2443 460,2891 227,2881 225,2720 228,2480 306,2484"/>
                <polygon class="c4" points="466,2348 570,2350 570,2328 709,2208 709,2258 700,2260 695,2780 635,2780 630,2788 634,2828 628,2836 635,2873 645,2883 656,2898 460,2891"/>
                <polygon class="c2" points="708,2023 864,2025 864,2071 966,2073 968,2168 968,2258 959,2260 958,2501 1087,2500 1087,2258 1348,2255 1348,2496 1371,2496 1373,2781 1100,2785 695,2780 700,2260 709,2258"/>
                <polygon class="c3" points="1074,1645 1100,1645 1100,1693 1258,1694 1258,1646 1337,1644 1337,1786 1369,1788 1369,1875 1421,1875 1421,1921 1367,1924 1367,2020 1358,2020 1360,2255 1087,2258 1087,2500 958,2501 959,2260 968,2258 968,2168 1071,2163 1075,2073"/>
                <polygon class="c3" points="1367,1924 1536,1918 1541,2778 1373,2781 1371,2496 1348,2496 1348,2255 1360,2255 1358,2020 1367,2020"/>
              </g>
              <path class="xmark" d="M357 490l38 38M395 490l-38 38M2165 490l38 38M2203 490l-38 38M357 2601l38 38M395 2601l-38 38M2165 2601l38 38M2203 2601l-38 38"/>
              <g class="sbar">
                <rect x="885" y="2728" width="32" height="28" class="k"/><rect x="917" y="2728" width="30" height="28" class="w"/><rect x="947" y="2728" width="30" height="28" class="k"/><rect x="977" y="2728" width="30" height="28" class="w"/><rect x="1007" y="2728" width="31" height="28" class="k"/><rect x="1038" y="2728" width="150" height="28" class="w"/><rect x="1188" y="2728" width="152" height="28" class="k"/><rect x="1340" y="2728" width="149" height="28" class="w"/><rect x="1489" y="2728" width="153" height="28" class="k"/>
              </g>
              <g class="slabels">
                <text x="887" y="2702">50</text><text x="1038" y="2702">0</text><text x="1189" y="2702">50</text><text x="1339" y="2702">100</text><text x="1489" y="2702">150</text><text x="1672" y="2702">200 km</text>
              </g>
            </svg>
            <i class="handle h-tl"></i><i class="handle h-tm"></i><i class="handle h-tr"></i>
            <i class="handle h-ml"></i><i class="handle h-mr"></i>
            <i class="handle h-bl"></i><i class="handle h-bm"></i><i class="handle h-br"></i>
          </div>
        </div>
        <div class="vscroll">
          <span class="sbtn"><i class="tri-up"></i></span>
          <span class="thumb"></span>
          <span class="sbtn"><i class="tri-down"></i></span>
        </div>
      </div>
    </main>

    <div class="splitter"><span class="split-dots"></span></div>

    <section class="panel">
      <div class="panel-title"><span>Item Properties</span>
        <svg class="dock" viewBox="0 0 46 26"><path d="M1 3h20v22H1zM6 3V8h11v11h4M6 8v11h11" fill="none" stroke="#777" stroke-width="1.500" stroke-dasharray="2 1"/><path d="M27 3h18v22H27zM30 6l12 16M42 6L30 22" fill="none" stroke="#777" stroke-width="1.500" stroke-dasharray="2 1"/></svg>
      </div>
      <div class="item-name">Map 1</div>
      <div class="item-tools">
        <svg class="pi"><use href="#refresh"/></svg><span class="psep"></span>
        <svg class="pi"><use href="#setext"/></svg><svg class="pi"><use href="#viewext"/></svg><span class="psep"></span>
        <svg class="pi"><use href="#setscale"/><text x="17" y="35" class="svg-s">1:23</text></svg><svg class="pi"><use href="#viewscale"/><text x="17" y="35" class="svg-s">1:23</text></svg><span class="psep"></span>
        <svg class="pi"><use href="#bookmk"/></svg><svg class="pi"><use href="#interact"/></svg><span class="psep"></span>
        <svg class="pi"><use href="#abc"/><text x="19" y="25" class="svg-abc">abc</text></svg><svg class="pi"><use href="#overlay"/></svg>
      </div>

      <div class="props">
        <div class="head first"><svg class="tri"><polygon points="2,3 20,3 11,18"/></svg><b>Main Properties</b></div>
        <div class="box box-main">
          <div class="row r47"><label class="lab">Scale</label><div class="inp">3007339</div><svg class="dd"><use href="#dd"/></svg></div>
          <div class="row r45"><label class="lab">Map rotation</label><div class="inp spin">0.00 °<span class="spin-btn"><i class="tri-up"></i><i class="tri-down"></i></span></div><svg class="dd"><use href="#dd"/></svg></div>
          <div class="row r50"><label class="lab">CRS</label><div class="combo">Use Project CRS<i class="combo-arrow"></i></div><span class="sq"><svg class="sq-ico"><use href="#crsbtn"/></svg></span><svg class="dd"><use href="#dd"/></svg></div>
          <div class="row check-row mt22"><span class="cb">√</span><span class="cb-label">Draw map canvas items</span></div>
        </div>

        <div class="head"><svg class="tri"><polygon points="2,3 20,3 11,18"/></svg><b>Layers</b></div>
        <div class="box box-layers">
          <div class="row r45 first-row"><span class="cb"></span><span class="cb-label follow">Follow map theme</span><div class="combo combo-s">(none)<i class="combo-arrow"></i></div><svg class="dd"><use href="#dd"/></svg></div>
          <div class="row r44"><span class="cb"></span><span class="cb-label grow">Lock layers</span><span class="sq"><svg class="sq-ico"><use href="#eye"/></svg></span><svg class="dd"><use href="#dd"/></svg></div>
          <div class="row check-row mt27"><span class="cb off"></span><span class="cb-label dim">Lock styles for layers</span></div>
        </div>

        <div class="head"><svg class="tri"><polygon points="2,3 20,3 11,18"/></svg><b>Extents</b></div>
        <div class="box box-ext">
          <div class="row r47"><label class="lab lab-s">X min</label><div class="inp">84702.634</div><svg class="dd"><use href="#dd"/></svg></div>
          <div class="row r47"><label class="lab lab-s">Y min</label><div class="inp">3374424.412</div><svg class="dd"><use href="#dd"/></svg></div>
          <div class="row r47"><label class="lab lab-s">X max</label><div class="inp">739743.166</div><svg class="dd"><use href="#dd"/></svg></div>
          <div class="row r47"><label class="lab lab-s">Y max</label><div class="inp">4214673.927</div><svg class="dd"><use href="#dd"/></svg></div>
        </div>

        <div class="head wide ten"><svg class="tri"><polygon points="5,1 18,11 5,21"/></svg><span class="cb hcb"></span><b>Temporal Range</b></div>
        <div class="head wide dim-head"><svg class="tri"><polygon points="5,1 18,11 5,21"/></svg><span class="cb off hcb"></span><b>Controlled by Atlas</b></div>
        <div class="head wide"><svg class="tri"><polygon points="5,1 18,11 5,21"/></svg><b>Grids</b></div>
        <div class="head wide"><svg class="tri"><polygon points="5,1 18,11 5,21"/></svg><b>Overviews</b></div>
        <div class="head wide"><svg class="tri"><polygon points="5,1 18,11 5,21"/></svg><b>Position and Size</b></div>
        <div class="head wide"><svg class="tri"><polygon points="5,1 18,11 5,21"/></svg><b>Rotation</b></div>
        <div class="head tight"><svg class="tri"><polygon points="5,1 18,11 5,21"/></svg><span class="cb hcb"></span><b>Frame</b></div>
        <div class="head t65"><svg class="tri"><polygon points="5,1 18,11 5,21"/></svg><span class="cb hcb">√</span><b>Background</b></div>
        <div class="head t65"><svg class="tri"><polygon points="5,1 18,11 5,21"/></svg><b>Item ID</b></div>
        <div class="head t65"><svg class="tri"><polygon points="5,1 18,11 5,21"/></svg><b>Rendering</b></div>
        <div class="head tight"><svg class="tri"><polygon points="2,3 20,3 11,18"/></svg><b>Variables</b></div>
        <div class="box box-vars">
          <div class="tree">
            <div class="tree-main">
              <div class="tree-head"><span class="col1">Variable</span><span class="col2">Value</span></div>
              <div class="tree-group"><i class="group-tri"></i><b>Global</b></div>
              <div class="vrow"><span class="vn">qgis_locale</span><span class="vv">'en'</span></div>
              <div class="vrow"><span class="vn">qgis_os_n…</span><span class="vv">'osx'</span></div>
              <div class="vrow"><span class="vn">qgis_platf…</span><span class="vv">'desktop'</span></div>
              <div class="vrow"><span class="vn">qgis_relea…</span><span class="vv">'Białowieża'</span></div>
              <div class="vrow"><span class="vn">qgis_shor…</span><span class="vv">'3.22'</span></div>
              <div class="vrow"><span class="vn">qgis_versi…</span><span class="vv">'3.22.5-Białowieża'</span></div>
              <div class="vrow"><span class="vn">qgis_versi…</span><span class="vv">32205</span></div>
              <div class="vrow"><span class="vn">user_acc…</span><span class="vv">'karl'</span></div>
              <div class="vrow"><span class="vn">user_full…</span><span class="vv">'Karl'</span></div>
            </div>
            <div class="tree-scroll"><span class="tsb"><i class="tri-up"></i></span><span class="tthumb"></span><span class="tgap"></span><span class="tsb"><i class="tri-down"></i></span></div>
          </div>
          <div class="var-btns">
            <span class="vbtn"><svg class="cross" viewBox="0 0 28 28"><path d="M10 1h8v9h9v8h-9v9h-8v-9H1v-8h9z" fill="#fff" stroke="#4f8f5a" stroke-width="2.500"/></svg></span>
            <span class="vbtn off"><svg class="cross" viewBox="0 0 28 28"><rect x="1" y="9" width="26" height="10" fill="#3a3a3a" stroke="#6e6666" stroke-width="2.500"/></svg></span>
          </div>
        </div>
      </div>
    </section>
  </div>

  <footer class="statusbar">
    <span class="st st-x">x: 171.994 mm</span>
    <span class="st st-y">y: 268.576 mm</span>
    <span class="st st-p">page: 1</span>
    <div class="zoomcombo"><span>80.6%</span><i class="zoom-arrow"></i></div>
    <div class="slider"><i class="slider-min"></i><i class="slider-handle"></i><i class="slider-track"></i></div>
    <i class="sizegrip"></i>
  </footer>
</div>
</body>
</html>
```

FILE: styles.css
```css
* { box-sizing: border-box; }
html, body { margin: 0; padding: 0; background: #000; }
body { width: 3206px; height: 2940px; font-family: "Inter", "Liberation Sans", sans-serif; font-size: 25.5px; color: #e2e2e2; overflow: hidden; }
i { display: block; font-style: normal; }
.defs { position: absolute; width: 0; height: 0; }
.svg-11 { font: 700 20px "Liberation Sans", sans-serif; fill: #222; text-anchor: middle; }
.svg-t { font: 400 26px "Liberation Serif", serif; fill: #333; text-anchor: middle; }
.svg-n { font: 700 13px "Liberation Sans", sans-serif; fill: #fff; text-anchor: middle; }
.svg-c { font: 700 15px "Liberation Mono", monospace; fill: #111; text-anchor: middle; }
.svg-s { font: 400 11px "Liberation Sans", sans-serif; fill: #555; text-anchor: middle; }
.svg-abc { font: 400 13px "Liberation Mono", monospace; fill: #111; text-anchor: middle; }

.window { width: 3206px; height: 2940px; background: #333; border-radius: 16px; overflow: hidden; display: flex; flex-direction: column; border-left: 2px solid #5c5c5c; border-bottom: 2px solid #666; }

.titlebar { height: 58px; flex: none; background: #272727; border-top: 2px solid #6e6e6e; border-bottom: 2px solid #161616; display: grid; grid-template-columns: 1fr auto 1fr; align-items: center; }
.lights { display: flex; gap: 16px; padding-left: 14px; }
.light { width: 24px; height: 24px; border-radius: 50%; }
.red { background: #ff5f57; }
.amber { background: #febc2e; }
.green { background: #28c840; }
.title { grid-column: 2; font-size: 25.5px; font-weight: 600; color: #a6a6a6; margin-left: -6px; margin-top: -3px; }

.toolbar { display: flex; align-items: center; flex: none; background: #343434; }
.tb1 { height: 78px; border-bottom: 2px solid #5f5f5f; padding: 0 0 2px 8px; }
.tb2 { height: 75px; border-bottom: 3px solid #666; padding-left: 8px; }
.grip { flex: none; width: 12px; height: 34px; margin-right: 2px; background: radial-gradient(circle, #747474 2.4px, transparent 2.9px) 0 0 / 6px 7px; }
.g2 { margin-left: 18px; margin-right: 5px; }
.tb1 .g2 { margin-left: 16px; }
.tb { flex: 0 0 66px; display: flex; justify-content: center; align-items: center; }
.ico { width: 48px; height: 48px; display: block; }
.sep { flex: none; height: 40px; position: relative; }
.sep::after { content: ""; position: absolute; left: 8px; top: 0; width: 2px; height: 40px; background: #424242; }
.s15 { width: 15px; }
.s18 { width: 18px; }
.s9 { width: 9px; }
.s9::after { left: 3px; }
.pagecombo { flex: none; width: 164px; height: 58px; margin: 0 3px; display: flex; background: #1f1f1f; border: 3px solid #272727; border-radius: 6px; }
.pagecombo-text { flex: 1; color: #5a5a5a; font-size: 26px; line-height: 52px; padding-left: 5px; }
.pagecombo-arrow { width: 38px; background: #3c3c3c linear-gradient(#484848, #343434); border-radius: 0 4px 4px 0; position: relative; }
.pagecombo-arrow::after { content: ""; position: absolute; left: 10px; top: 22px; border: 8px solid transparent; border-top: 10px solid #222; border-bottom: 0; }
.menu-arrow { flex: none; width: 16px; margin: 0 1px 0 3px; border-top: 11px solid #bbb; border-left: 8px solid transparent; border-right: 8px solid transparent; }

.workspace { flex: 1; min-height: 0; display: flex; }
.tools { flex: none; width: 76px; display: flex; flex-direction: column; align-items: center; padding-top: 11px; padding-right: 2px; }
.grip-h { flex: none; width: 34px; height: 12px; margin-bottom: 6px; background: radial-gradient(circle, #747474 2.2px, transparent 2.7px) 0 0 / 7px 6px; }
.tool { flex: 0 0 64px; width: 64px; display: flex; align-items: center; justify-content: center; }
.up .ico { transform: translateY(-3px); }
.active { background: #2e2e2e; border: 2px solid #252525; box-shadow: inset 0 0 0 2px #3c3c3c; border-radius: 6px; height: 60px; flex-basis: 60px; margin: 2px 0; }

.center { flex: none; width: 2432px; display: flex; flex-direction: column; border-left: 3px solid #232323; }
.hruler-row { flex: none; height: 31px; display: flex; }
.ruler-corner { flex: none; width: 30px; }
.hruler { flex: 1; min-width: 0; display: flex; overflow: hidden; padding-left: 32px; color: #bdbdbd;
  background:
    repeating-linear-gradient(90deg, #cfcfcf 78.1px, #cfcfcf 79.6px, transparent 79.6px, transparent 168.7px) left bottom / 100% 11px no-repeat,
    repeating-linear-gradient(90deg, #cfcfcf 5.62px, #cfcfcf 7.1px, transparent 7.1px, transparent 14.68px) left bottom / 100% 7px no-repeat; }
.htick { flex: 0 0 90.6px; border-left: 2px solid #d4d4d4; padding-left: 3px; font: 400 18px/26px "Roboto", sans-serif; }
.canvas-row { flex: 1; min-height: 0; display: flex; }
.vruler { flex: none; width: 30px; position: relative; overflow: hidden; padding-top: 48px; color: #bdbdbd;
  background:
    repeating-linear-gradient(180deg, #cfcfcf 2.65px, #cfcfcf 4.15px, transparent 4.15px, transparent 93.35px) right top / 11px 100% no-repeat,
    repeating-linear-gradient(180deg, #cfcfcf 2.65px, #cfcfcf 4.15px, transparent 4.15px, transparent 11.72px) right top / 7px 100% no-repeat; }
.vtick { height: 90.7px; border-top: 2px solid #d4d4d4; padding: 3px 0 0 3px; font: 400 18px/17px "Roboto", sans-serif; }
.vtick span { display: block; width: 17px; writing-mode: vertical-rl; transform: rotate(180deg); }
.cursor-mark { position: absolute; left: 0; top: 2485px; width: 30px; height: 2px; background: #e01818; }
.canvas { flex: 1; min-width: 0; background: #d6d6d6; padding: 50px 0 0 195px; overflow: hidden; }
.sheet { width: 1977px; height: 2535px; position: relative; }
.sheet::before { content: ""; position: absolute; left: 34px; right: -15px; top: 15px; bottom: -15px; background: #999; }
.sheet::after { content: ""; position: absolute; inset: 0; background: #fff; border: 2px dashed #3d0f5e; }
.sheet-art { position: absolute; inset: 0; width: 100%; height: 100%; z-index: 1; }
.c1 { fill: #fff5f0; }
.c2 { fill: #fdbba3; }
.c3 { fill: #fe7150; }
.c4 { fill: #d42121; }
.c5 { fill: #67000d; }
.seam { fill: none; stroke: #8a2a36; stroke-width: 1; }
.seam-l { fill: none; stroke: #fea48e; stroke-width: 1; }
.xmark { stroke: #8a8a8a; stroke-width: 2; fill: none; }
.sbar rect { stroke: #777; stroke-width: 2; }
.sbar .k { fill: #000; }
.sbar .w { fill: #fff; }
.slabels text { font: 400 39px "Liberation Sans", sans-serif; fill: #000; text-anchor: middle; }
.handle { position: absolute; width: 21px; height: 21px; border: 1.5px solid #3c8fd0; z-index: 2; }
.h-tl { left: 0; top: 0; }
.h-tm { left: 978px; top: 0; }
.h-tr { right: 0; top: 0; }
.h-ml { left: 0; top: 1258px; }
.h-mr { right: 0; top: 1258px; }
.h-bl { left: 0; bottom: 0; }
.h-bm { left: 978px; bottom: 0; }
.h-br { right: 0; bottom: 0; }

.vscroll { flex: none; width: 28px; display: flex; flex-direction: column; background: #2f2f2f; }
.sbtn { flex: 0 0 26px; background: #3b3b3b; border: 2px solid #4a4a4a; display: flex; align-items: center; justify-content: center; }
.thumb { flex: 1; margin: 47px 0 44px; background: #3c3c3c; border: 2px solid #4a4a4a; }
.tri-up { width: 0; height: 0; border: 8px solid transparent; border-bottom: 11px solid #bcbcbc; border-top: 0; }
.tri-down { width: 0; height: 0; border: 8px solid transparent; border-top: 11px solid #bcbcbc; border-bottom: 0; }

.splitter { flex: none; width: 12px; display: flex; align-items: flex-start; justify-content: center; }
.split-dots { margin-top: 1323px; width: 4px; height: 34px; background: repeating-linear-gradient(180deg, #777 0 4px, transparent 4px 7px); }

.panel { flex: 1; min-width: 0; display: flex; flex-direction: column; }
.panel-title { flex: none; height: 39px; display: flex; align-items: center; justify-content: space-between; padding: 1px 3px 0 8px; font-size: 22.4px; color: #dcdcdc; border-top: 2px solid #666; }
.dock { width: 50px; height: 28px; }
.item-name { flex: none; height: 40px; background: #c8c8c8; color: #fff; font-weight: 700; font-size: 26px; line-height: 40px; padding-left: 10px; }
.item-tools { flex: none; height: 63px; display: flex; align-items: center; padding-left: 12px; border-bottom: 1px solid #2c2c2c; }
.pi { width: 36px; height: 40px; margin-right: 15px; flex: none; }
.psep { width: 2px; height: 34px; background: #404040; margin: 0 10px 0 0; flex: none; }

.props { flex: 1; min-height: 0; border-left: 1px solid #2b2b2b; overflow: hidden; display: flex; flex-direction: column; }
.head { flex: none; height: 42px; margin: 11px 0 0 29px; display: flex; align-items: center; }
.head.first { margin-top: 21px; }
.head b { font-weight: 700; font-size: 26.6px; color: #e4e4e4; }
.head .tri { width: 22px; height: 22px; flex: none; margin-right: 16px; }
.tri polygon { fill: none; stroke: #1c1c1c; stroke-width: 2.5; }
.wide { margin-top: 14px; }
.ten { margin-top: 11px; }
.tight { margin-top: 5.5px; }
.t65 { margin-top: 6.5px; }
.hcb { margin: 0 17px 0 -4px; width: 28px; height: 32px; }
.dim-head b { color: #5a5a5a; }
.dim-head .tri polygon { stroke: #444; }

.box { flex: none; margin-left: 26px; width: 632px; border: 2px solid #3c3c3c; border-radius: 4px; padding: 0 28px 0 24px; }
.box-main { height: 289px; padding-top: 27px; }
.box-layers { height: 225px; padding-top: 28px; }
.box-ext { height: 296px; padding-top: 26px; }
.box-vars { height: 525px; margin-top: 0; padding: 26px 29px 0 25px; }

.row { display: flex; align-items: center; }
.r47 { height: 47px; }
.r45 { height: 45px; margin-top: 17px; }
.r50 { height: 50px; margin-top: 17px; }
.r44 { height: 44px; margin-top: 18px; }
.box-main .r47 { margin-top: 0; }
.box-ext .r47 + .r47 { margin-top: 17px; }
.first-row { margin-top: 0; }
.check-row { height: 27px; }
.mt22 { margin-top: 22px; }
.mt27 { margin-top: 27px; }
.lab { flex: none; width: 166px; }
.lab-s { width: 88px; }
.inp { flex: 1; min-width: 0; height: 100%; background: #1e1e1e; border-radius: 5px; padding-left: 6px; display: flex; align-items: center; color: #e4e4e4; letter-spacing: .3px; }
.spin { position: relative; justify-content: space-between; padding-left: 9px; }
.spin-btn { width: 28px; height: 100%; background: #3a3a3a; border-radius: 0 5px 5px 0; display: flex; flex-direction: column; align-items: center; justify-content: center; gap: 6px; }
.combo { flex: 1; min-width: 0; height: 100%; background: linear-gradient(#434343, #363636); border: 2px solid #5a5a5a; outline: 2px solid #262626; border-radius: 5px; display: flex; align-items: center; justify-content: space-between; color: #0f0f0f; padding: 0 22px 0 7px; }
.combo-s { flex: 0 0 224px; }
.combo-arrow { width: 0; height: 0; border: 7px solid transparent; border-top: 9px solid #1c1c1c; border-bottom: 0; }
.sq { flex: none; width: 46px; height: 100%; margin-left: 11px; background: #3a3a3a; border: 2px solid #555; outline: 2px solid #262626; border-radius: 5px; display: flex; align-items: center; justify-content: center; }
.sq-ico { width: 34px; height: 34px; }
.dd { flex: none; width: 50px; height: 36px; margin-left: 20px; }
.cb { flex: none; width: 26px; height: 27px; background: #1e1e1e; color: #b4b4b4; display: flex; align-items: center; justify-content: center; font: 400 26px "Roboto", sans-serif; }
.cb.off { background: transparent; border: 2px solid #3e3e3e; }
.cb-label { margin-left: 12px; }
.follow { flex: 0 0 244px; }
.grow { flex: 1; }
.dim { color: #5e5e5e; }

.tree { width: 574px; height: 412px; display: flex; background: #2b2b2b; border: 2px solid #262626; }
.tree-main { flex: 1; min-width: 0; overflow: hidden; }
.tree-head { height: 33px; display: flex; background: linear-gradient(#3e3e3e, #353535); border-bottom: 2px solid #2a2a2a; color: #0d0d0d; font-size: 22px; align-items: center; }
.col1 { width: 199px; padding-left: 3px; border-right: 3px solid #2a2a2a; height: 100%; display: flex; align-items: center; }
.col2 { padding-left: 5px; }
.tree-group { height: 44px; background: #1e1e1e; display: flex; align-items: center; padding-left: 10px; font-size: 25.5px; }
.tree-group b { font-weight: 700; margin-left: 17px; }
.group-tri { width: 0; height: 0; border: 14px solid transparent; border-top: 20px solid #707070; border-bottom: 0; }
.vrow { height: 40px; display: flex; align-items: center; font-style: italic; font-size: 25.5px; color: #e4e2dc; background: #523a16; border-bottom: 2px solid #33291a; }
.vrow:nth-child(odd) { background: #6c4c14; }
.vn { flex: none; width: 161px; margin-left: 48px; white-space: nowrap; }
.vv { white-space: nowrap; }
.tree-scroll { flex: none; width: 26px; display: flex; flex-direction: column; margin-left: 1px; background: #323232; }
.tsb { flex: 0 0 25px; background: #3a3a3a; border: 2px solid #4a4a4a; display: flex; align-items: center; justify-content: center; }
.tthumb { flex: 0 0 165px; margin-top: 3px; background: #3c3c3c; border: 2px solid #4a4a4a; }
.tgap { flex: 1; }
.var-btns { display: flex; justify-content: flex-end; gap: 15px; margin-top: 8px; }
.vbtn { width: 53px; height: 46px; background: #3a3a3a; border: 2px solid #4a4a4a; outline: 2px solid #282828; border-radius: 5px; display: flex; align-items: center; justify-content: center; }
.cross { width: 28px; height: 28px; }

.statusbar { flex: none; height: 58px; display: flex; align-items: center; padding: 3px 0 0 2052px; font-size: 26px; position: relative; border-top: 1px solid #262626; }
.st { flex: none; white-space: nowrap; }
.st-x { width: 213px; }
.st-y { width: 212px; }
.st-p { width: 213px; }
.zoomcombo { flex: none; width: 254px; height: 48px; background: #1e1e1e; border: 2px solid #272727; border-radius: 5px; display: flex; align-items: center; padding-left: 6px; justify-content: space-between; font-size: 25.5px; }
.zoom-arrow { width: 41px; height: 100%; background: linear-gradient(#464646, #383838); position: relative; }
.zoom-arrow::after { content: ""; position: absolute; left: 13px; top: 15px; border: 7px solid transparent; border-top: 14px solid #171717; border-bottom: 0; }
.slider { flex: none; margin-left: 16px; width: 194px; height: 30px; display: flex; align-items: center; }
.slider-min { width: 13px; height: 16px; background: #5a9ee8; border: 2px solid #2c2c2c; }
.slider-handle { width: 26px; height: 36px; background: #454545; border: 2px solid #282828; border-radius: 6px; }
.slider-track { flex: 1; height: 12px; background: #272727; border: 1px solid #3e3e3e; }
.sizegrip { position: absolute; right: 0; bottom: 0; width: 24px; height: 28px; background: repeating-linear-gradient(135deg, #777 0 3px, transparent 3px 8px); clip-path: polygon(100% 0, 100% 100%, 0 100%); }
```
